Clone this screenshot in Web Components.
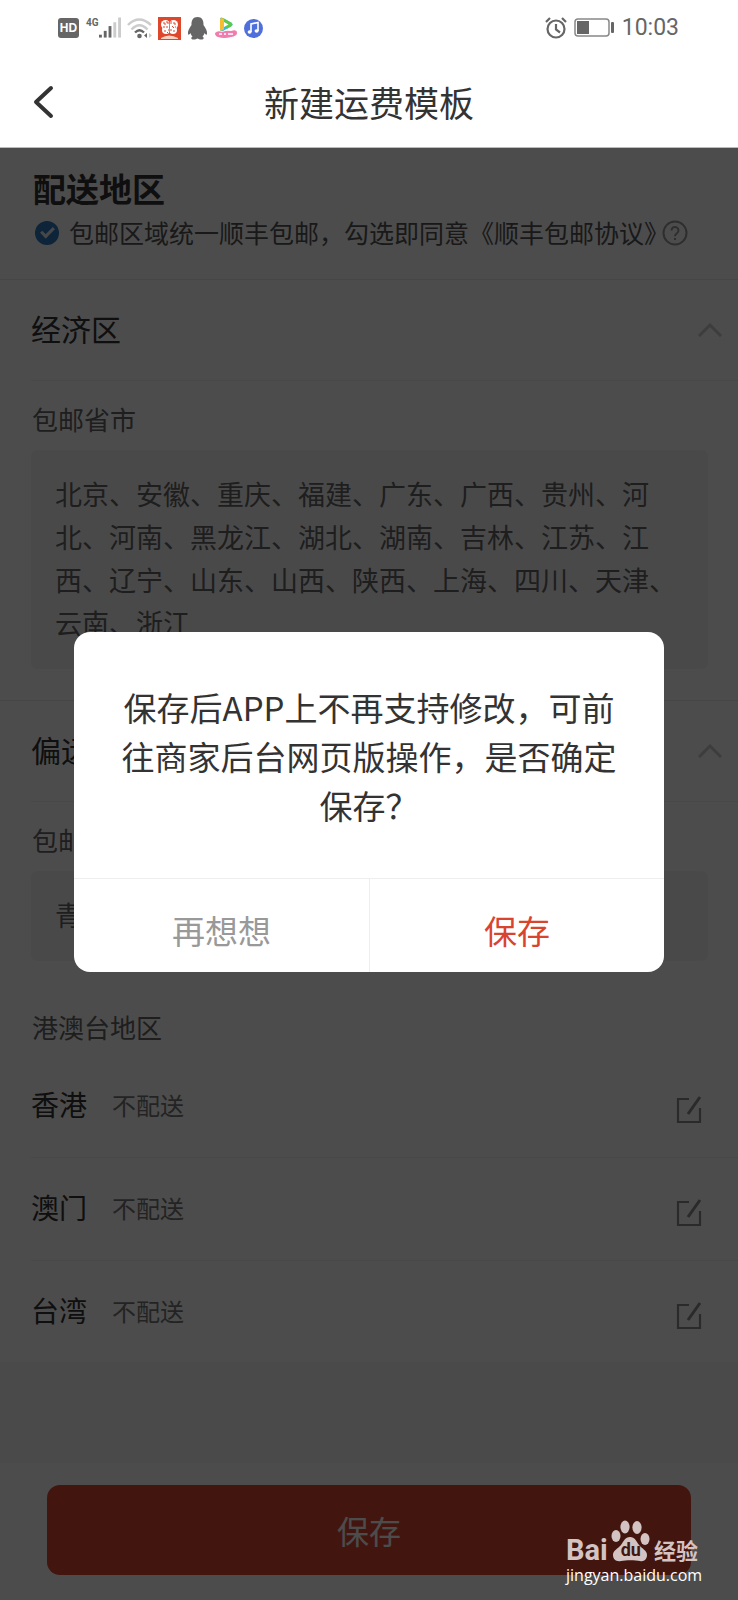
<!DOCTYPE html>
<html lang="zh-CN">
<head>
<meta charset="utf-8">
<meta name="viewport" content="width=device-width, initial-scale=1">
<title>新建运费模板</title>
<style>
html, body { margin: 0; padding: 0; }
body { font-family: "Noto Sans CJK SC", sans-serif; color: #333; background: #fff; }
</style>
</head>
<body>
<freight-page></freight-page>

<script>
const define = (name, html) => {
  const template = document.createElement('template');
  template.innerHTML = html;
  customElements.define(name, class extends HTMLElement {
    constructor() {
      super();
      this.attachShadow({ mode: 'open' }).append(template.content.cloneNode(true));
    }
  });
};

define('status-bar', `
<style>
:host { display: flex; align-items: center; justify-content: space-between; height: 56px; padding: 0 59px 0 58px; box-sizing: border-box; color: #666; }
.group { display: flex; align-items: center; }
.left { gap: 6px; }
.right { gap: 7px; font: 23px/28px Roboto, sans-serif; }
svg { display: block; }
.hd { width: 21px; height: 20px; margin-right: 1px; border-radius: 3px; background: #666; color: #fff; font: bold 12px/20px "Liberation Sans", sans-serif; text-align: center; }
.signal { display: flex; align-items: flex-start; }
.net { font: bold 10px/12px Roboto, sans-serif; }
</style>
<div class="group left">
  <span class="hd">HD</span>
  <span class="signal"><span class="net">4G</span>
    <svg width="22" height="22" viewBox="0 0 23 22"><g fill="#666"><rect x="0" y="18" width="3" height="3"/><rect x="5" y="14" width="3" height="7"/><rect x="10" y="9" width="3" height="12"/></g><g fill="#ccc"><rect x="15" y="5" width="3" height="16"/><rect x="20" y="0" width="3" height="21"/></g></svg>
  </span>
  <svg width="25" height="22" viewBox="0 0 25 22" fill="none" stroke-width="2.4"><path d="M1 8Q12 -3 24 8M4.500 12.500Q12.500 4 20.500 12.500" stroke="#ccc"/><path d="M8 15.500Q12.500 11 17 15.500" stroke="#666"/><circle cx="12.500" cy="19" r="2.300" fill="#666"/><path d="M20 16v5l-3-2.500z" fill="#666"/><path d="M22 16v5l3-2.500z" fill="#ccc"/></svg>
  <svg width="23" height="23" viewBox="0 0 23 23"><rect width="23" height="23" fill="#df472c"/><g fill="#fff"><circle cx="7.500" cy="7.500" r="4.500"/><circle cx="15.500" cy="7.500" r="4.500"/><circle cx="8" cy="13" r="4"/><circle cx="15" cy="13" r="4"/><path d="M3 21q8-5 17 0v1H3z" fill="#fbd0c0"/></g><g fill="none" stroke="#df472c"><path d="M5 6h2v2M9 4v2h2M13 4v3M16 5v2h2M5 10h2M9 9v2M14 9l2 2M18 10h-1M7 13v2M10 13h1M13 12v2M16 13v2M9 16l1-1"/><path d="M11.500 3v14" stroke-width=".7"/></g></svg>
  <svg width="21" height="23" viewBox="0 0 20 23"><path d="M10 0C5.500 0 3.800 3.500 4 8c-2 3-4 6-3.500 9 .3 1.500 1.500.5 2.500-1 .3 1.500 1 2.500 2 3.500-2 1-1.500 3 1 3 1.800 0 3.200-.5 4-1 .8.500 2.200 1 4 1 2.500 0 3-2 1-3 1-1 1.700-2 2-3.500 1 1.500 2.200 2.500 2.500 1 .5-3-1.500-6-3.500-9C16.200 3.500 14.500 0 10 0z" fill="#666"/></svg>
  <svg width="24" height="22" viewBox="0 0 24 22"><path d="M6 2Q6-.5 9 1l8 4.500q3 2 0 4l-8 4.500Q6 15 6 12z" fill="#35b8e8"/><path d="M9 1l8 4.500q3 2 0 4l-4 2.300L7 1z" fill="#5fc74a"/><path d="M7 1l3 .5v11l-3 1.500q-1-1-1-2V2z" fill="#f6bd32"/><path d="M10 5v5l4.500-2.500z" fill="#fff"/><path d="M1 16q3-3 7-1 5-2 9-1 6-2 6 2 0 3-6 4-7 2-13 0-3-1-3-4z" fill="#f17caf"/><path d="M5 17h3M10 17h2M14 17h5" stroke="#fff" stroke-width="1.500"/></svg>
  <svg width="19" height="19" viewBox="0 0 19 19"><circle cx="9.500" cy="9.500" r="9.500" fill="#4f6fdc"/><path d="M7 13V5l7-1.500V12" fill="none" stroke="#fff" stroke-width="1.600"/><ellipse cx="5.600" cy="13" rx="2" ry="1.700" fill="#fff"/><ellipse cx="12.600" cy="12" rx="2" ry="1.700" fill="#fff"/></svg>
</div>
<div class="group right">
  <svg width="22" height="22" viewBox="0 0 22 22" fill="none" stroke="#666" stroke-width="2.200"><circle cx="11" cy="12" r="8.500"/><path d="M11 7v5.500l4 3M1 5l4-4M21 5l-4-4"/></svg>
  <svg width="41" height="20" viewBox="0 0 41 20"><rect x="1" y="1" width="34" height="17" rx="3" fill="none" stroke="#888" stroke-width="1.500"/><rect x="3" y="3" width="12" height="13" fill="#666"/><rect x="37" y="4" width="3" height="11" rx="1" fill="#666"/></svg>
  <span>10:03</span>
</div>`);

define('nav-bar', `
<style>
:host { display: grid; grid-template-columns: 88px 1fr 88px; align-items: center; height: 92px; box-sizing: border-box; border-bottom: 1px solid #bbb; }
button { border: 0; background: none; padding: 0 0 0 33px; text-align: left; }
svg { display: block; }
h1 { margin: 0; font-size: 35px; line-height: 48px; font-weight: 400; text-align: center; color: #333; }
</style>
<button type="button" aria-label="返回"><svg width="21" height="34" viewBox="0 0 21 34" fill="none" stroke="#333" stroke-width="4" stroke-linecap="round" stroke-linejoin="round"><path d="M18 3L3 17l15 14"/></svg></button>
<h1><slot></slot></h1>`);

define('delivery-agreement', `
<style>
:host { display: block; padding: 18px 33px 0; height: 132px; box-sizing: border-box; border-bottom: 1px solid #ececec; }
h2 { margin: 0; font-size: 33px; line-height: 44px; font-weight: 700; }
.row { display: flex; align-items: center; height: 46px; font-size: 25px; color: #555; }
input { appearance: none; flex: none; margin: 0 10px 0 2px; width: 24px; height: 24px; border-radius: 50%; background: #2f78c0; display: grid; place-items: center; }
input::before { content: ""; width: 10px; height: 5px; margin-top: -4px; border: solid #eee; border-width: 0 0 3px 3px; rotate: -45deg; }
label, a { padding-bottom: 3px; color: inherit; text-decoration: none; white-space: nowrap; }
button { flex: none; margin-left: -7px; padding: 0; border: 0; background: none; }
svg { display: block; }
</style>
<h2>配送地区</h2>
<div class="row">
  <input type="checkbox" id="agree" checked>
  <label for="agree">包邮区域统一顺丰包邮，勾选即同意</label><a href="#agreement">《顺丰包邮协议》</a>
  <button type="button" aria-label="帮助"><svg width="26" height="26" viewBox="0 0 26 26" fill="none" stroke="#999" stroke-width="2"><circle cx="13" cy="13" r="11.500"/><path d="M9.500 10.500a3.500 3.500 0 1 1 5.500 2.800c-1.500 1-2 1.500-2 3M13 18v2"/></svg></button>
</div>`);

define('region-section', `
<style>
:host { display: block; }
header { display: flex; align-items: center; justify-content: space-between; height: 101px; margin-left: 31px; padding-right: 16px; box-sizing: border-box; border-bottom: 1px solid #f0f0f0; }
h3 { margin: 0; padding-bottom: 4px; font-size: 30px; line-height: 40px; font-weight: 400; }
button { border: 0; padding: 0; background: none; }
svg { display: block; }
h4 { margin: 0 0 0 32px; padding: 17px 0 11px; font-size: 26px; line-height: 41px; font-weight: 400; color: #666; }
p { margin: 0 30px 0 31px; padding: 22px 24px 25px; border-radius: 6px; background: #f6f6f6; font-size: 27px; line-height: 43px; color: #666; }
</style>
<header><h3><slot name="name"></slot></h3><button type="button" aria-label="收起"><svg width="24" height="14" viewBox="0 0 24 14" fill="none" stroke="#ccc" stroke-width="3"><path d="M1 13L12 2l11 11"/></svg></button></header>
<h4><slot name="label"></slot></h4>
<p><slot></slot></p>`);

define('region-row', `
<style>
:host { display: flex; align-items: center; height: 103px; margin-left: 31px; padding-right: 36px; box-sizing: border-box; border-bottom: 1px solid #f0f0f0; }
:host(:last-of-type) { border-bottom: 0; height: 101px; }
.name { padding-bottom: 4px; font-size: 28px; line-height: 40px; }
.state { flex: 1; margin-left: 25px; font-size: 24px; line-height: 36px; padding-bottom: 2px; color: #777; }
button { padding: 8px 0 0; border: 0; background: none; }
svg { display: block; }
</style>
<span class="name"><slot></slot></span>
<span class="state"><slot name="state"></slot></span>
<button type="button" aria-label="编辑"><svg width="26" height="28" viewBox="0 0 26 28" fill="none" stroke="#8c8c8c" stroke-width="2.200"><path d="M13 3H2v23h22V12"/><path d="M24 1L12 18" stroke-width="3"/></svg></button>`);

define('bottom-bar', `
<style>
:host { display: block; padding: 22px 47px 25px; background: #fff; }
button { display: block; width: 100%; height: 90px; padding: 0; border: 0; border-radius: 13px; background: #e04634; color: #fff; font: inherit; font-size: 32px; line-height: 44px; }
</style>
<button type="button"><slot></slot></button>`);

define('confirm-dialog', `
<style>
:host { position: absolute; inset: 0; display: grid; place-items: center; padding-top: 4px; box-sizing: border-box; }
section { width: 80%; border-radius: 16px; background: #fff; overflow: hidden; }
p { margin: 0; padding: 51px 44px 48px; font-size: 33px; line-height: 49px; text-align: center; color: #333; }
footer { display: grid; grid-template-columns: 1fr 1fr; border-top: 1px solid #eee; }
button { height: 93px; padding: 8px 0 0; border: 0; background: none; font: inherit; font-size: 33px; line-height: 44px; color: #999; }
button + button { border-left: 1px solid #eee; color: #d9442f; }
</style>
<section role="alertdialog" aria-modal="true" aria-labelledby="msg">
  <p id="msg"><slot></slot></p>
  <footer><button type="button">再想想</button><button type="button">保存</button></footer>
</section>`);

define('site-watermark', `
<style>
:host { position: absolute; right: 40px; bottom: 14px; display: block; width: 132px; color: #fff; }
.brand { display: flex; align-items: flex-end; justify-content: space-between; height: 44px; color: #d3c4c3; }
.bai { font: bold 29px/28px Roboto, sans-serif; }
.cn { font-size: 22px; line-height: 30px; font-weight: 700; }
.paw { flex: none; width: 39px; height: 44px; display: grid; }
.paw > * { grid-area: 1 / 1; }
svg { display: block; }
.du { align-self: end; justify-self: center; padding-bottom: 5px; color: #43150f; font: bold 18px/18px Roboto, sans-serif; }
.site { font: 16px/22px "Open Sans", sans-serif; }
</style>
<div class="brand"><span class="bai">Bai</span><span class="paw"><svg width="39" height="44" viewBox="0 0 39 44" fill="#d3c4c3"><ellipse cx="5" cy="16" rx="4.500" ry="6"/><ellipse cx="14" cy="7" rx="4.600" ry="6.500"/><ellipse cx="26" cy="7.500" rx="4.600" ry="6.500"/><ellipse cx="34" cy="19" rx="4.500" ry="6"/><path d="M19 17c5 0 6 4 9 8s8 5 8 10c0 4-3 7-7 6-5-1-14-1-19 0-5 1-8-2-8-6 0-5 5-6 8-10s4-8 9-8z"/></svg><span class="du">du</span></span><span class="cn">经验</span></div>
<div class="site">jingyan.baidu.com</div>`);

define('freight-page', `
<style>
:host { position: relative; display: flex; flex-direction: column; min-height: 100vh; }
main { position: relative; flex: 1; display: flex; flex-direction: column; background: #f7f7f7; }
.content { background: #fff; }
.gap { height: 31px; border-bottom: 1px solid #ececec; }
h4 { margin: 0 0 0 32px; padding: 45px 0 8px; font-size: 26px; line-height: 41px; font-weight: 400; color: #666; }
bottom-bar { margin-top: auto; }
.scrim { position: absolute; inset: 0; background: rgba(0, 0, 0, 0.7); }
</style>
<status-bar></status-bar>
<nav-bar>新建运费模板</nav-bar>
<main>
  <div class="content">
    <delivery-agreement></delivery-agreement>
    <region-section><span slot="name">经济区</span><span slot="label">包邮省市</span>北京、安徽、重庆、福建、广东、广西、贵州、河北、河南、黑龙江、湖北、湖南、吉林、江苏、江西、辽宁、山东、山西、陕西、上海、四川、天津、云南、浙江</region-section>
    <div class="gap"></div>
    <region-section><span slot="name">偏远区</span><span slot="label">包邮省市</span>青海</region-section>
    <h4>港澳台地区</h4>
    <region-row>香港<span slot="state">不配送</span></region-row>
    <region-row>澳门<span slot="state">不配送</span></region-row>
    <region-row>台湾<span slot="state">不配送</span></region-row>
  </div>
  <bottom-bar>保存</bottom-bar>
  <div class="scrim"></div>
</main>
<confirm-dialog>保存后APP上不再支持修改，可前往商家后台网页版操作，是否确定保存？</confirm-dialog>
<site-watermark></site-watermark>`);
</script>
</body>
</html>
